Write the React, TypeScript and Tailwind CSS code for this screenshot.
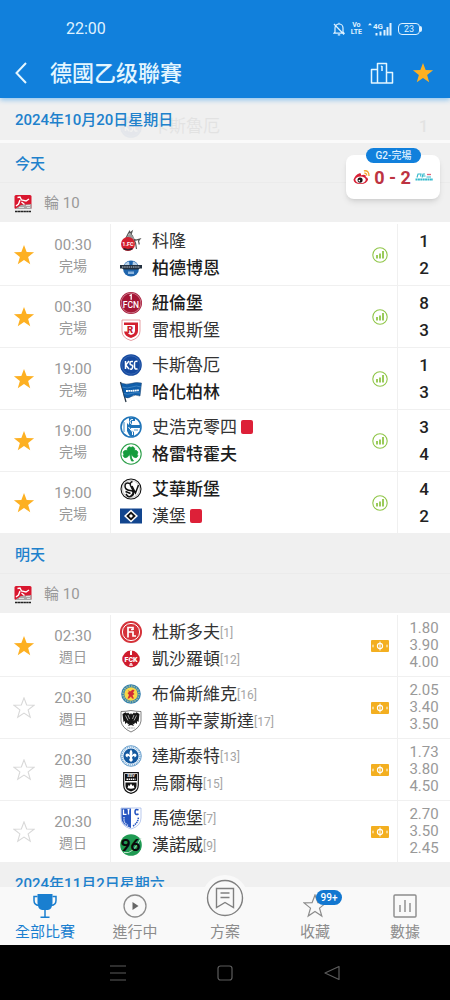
import { useState, type ReactNode } from "react";

type CrestName =
  | "koln" | "paderborn" | "nurnberg" | "jahn" | "ksc" | "hertha" | "schalke" | "furth" | "elversberg" | "hsv"
  | "dusseldorf" | "lautern" | "braunschweig" | "preussen" | "darmstadt" | "ulm" | "magdeburg" | "hannover";

type Team = { name: string; crest: CrestName; rank?: number; winner?: boolean; redCard?: boolean };
type Match = { time: string; status: string; teams: [Team, Team]; scores?: [number, number]; odds?: string[]; starred: boolean };

const today: Match[] = [
  { time: "00:30", status: "完場", starred: true, scores: [1, 2], teams: [{ name: "科隆", crest: "koln" }, { name: "柏德博恩", crest: "paderborn", winner: true }] },
  { time: "00:30", status: "完場", starred: true, scores: [8, 3], teams: [{ name: "紐倫堡", crest: "nurnberg", winner: true }, { name: "雷根斯堡", crest: "jahn" }] },
  { time: "19:00", status: "完場", starred: true, scores: [1, 3], teams: [{ name: "卡斯魯厄", crest: "ksc" }, { name: "哈化柏林", crest: "hertha", winner: true }] },
  { time: "19:00", status: "完場", starred: true, scores: [3, 4], teams: [{ name: "史浩克零四", crest: "schalke", redCard: true }, { name: "格雷特霍夫", crest: "furth", winner: true }] },
  { time: "19:00", status: "完場", starred: true, scores: [4, 2], teams: [{ name: "艾華斯堡", crest: "elversberg", winner: true }, { name: "漢堡", crest: "hsv", redCard: true }] },
];

const tomorrow: Match[] = [
  { time: "02:30", status: "週日", starred: true, odds: ["1.80", "3.90", "4.00"], teams: [{ name: "杜斯多夫", crest: "dusseldorf", rank: 1 }, { name: "凱沙羅頓", crest: "lautern", rank: 12 }] },
  { time: "20:30", status: "週日", starred: false, odds: ["2.05", "3.40", "3.50"], teams: [{ name: "布倫斯維克", crest: "braunschweig", rank: 16 }, { name: "普斯辛蒙斯達", crest: "preussen", rank: 17 }] },
  { time: "20:30", status: "週日", starred: false, odds: ["1.73", "3.80", "4.50"], teams: [{ name: "達斯泰特", crest: "darmstadt", rank: 13 }, { name: "烏爾梅", crest: "ulm", rank: 15 }] },
  { time: "20:30", status: "週日", starred: false, odds: ["2.70", "3.50", "2.45"], teams: [{ name: "馬德堡", crest: "magdeburg", rank: 7 }, { name: "漢諾威", crest: "hannover", rank: 9 }] },
];

const crests: Record<CrestName, ReactNode> = {
  koln: (
    <>
      <path d="M6 8 8 4 9.500 1.500 10 3l2-1.500-1 3 1.500 1.500 1 3 2.500 1 4-1-1.500 2 .8 3.500M14 10l1.500 3 1 6M9.500 5 7.500 8" fill="none" stroke="#555" strokeWidth="1.200" />
      <path d="m9 4 3 1 2.500 4-4 1-3-2z" fill="#999" />
      <circle cx="8" cy="14" r="7" fill="#d3202f" />
      <text x="8" y="16" textAnchor="middle" fontSize="5.500" fontWeight="700" fill="#fff" fontFamily="Roboto, sans-serif">1.FC</text>
      <path d="M3.500 18.500q4.500 2.500 9 0" stroke="#33212a" strokeWidth="1.500" fill="none" />
    </>
  ),
  paderborn: (
    <>
      <circle cx="11" cy="11.500" r="8" fill="#1f65ad" />
      <path d="M4 8.500a8 8 0 0 1 14 0z" fill="#b5cfe8" />
      <path d="M9 4h4l-.5 4h-3z" fill="#1f65ad" />
      <path d="M0 8h22v3.500h-2l-2 1H4l-2-1H0z" fill="#23303f" />
      <path d="M2 10h18" stroke="#c3cdd8" strokeWidth="1" strokeDasharray="1.500 .7" />
      <path d="M8 14.500h6V17H8z" fill="#8eb6df" />
    </>
  ),
  nurnberg: (
    <>
      <circle cx="11" cy="11" r="11" fill="#a51535" />
      <circle cx="11" cy="11" r="9.900" fill="none" stroke="#e3b7c0" strokeWidth=".6" />
      <path d="m9.500 3.800 1.700-1v5" stroke="#fff" strokeWidth="1.300" fill="none" />
      <text x="11" y="15.500" textAnchor="middle" fontSize="8.500" fontWeight="500" fill="#fff" fontFamily="Roboto, sans-serif">FCN</text>
    </>
  ),
  jahn: (
    <>
      <path d="M2 1h18v11q0 7-9 9.500-9-2.500-9-9.500z" fill="#fff" stroke="#e0888d" strokeWidth=".8" />
      <path d="M4 3.500h14V12q0 5-7 7-6-1.500-7-6.500h3.200q1 3 3.800 3.500 4-1 4-4.500V6H4z" fill="#d3202f" />
      <text x="10" y="14" textAnchor="middle" fontSize="9.500" fontWeight="900" fill="#c51d2c" fontFamily="Roboto, sans-serif">R</text>
    </>
  ),
  ksc: (
    <>
      <circle cx="11" cy="11" r="10.800" fill="#15499f" />
      <circle cx="11" cy="11" r="9.200" fill="none" stroke="#5d87c5" strokeWidth=".5" />
      <path d="M5.500 7v8M9 7l-3.200 4L9 15M13 7.500q-3-.5-3 1.500t1.500 2 1 2.500-2.700 1.300M17.500 7.500q-3-1-3 2v3q0 3.500 3 2.200" fill="none" stroke="#fff" strokeWidth="1.500" />
    </>
  ),
  hertha: (
    <>
      <path d="M.5 1 6 21" stroke="#2b3947" strokeWidth="1.300" />
      <path d="M1 2q5 2 10 .5T21.500 2L20 15q-5-2-8.500.5T4.500 16z" fill="#0f5eab" stroke="#163d67" strokeWidth=".5" />
      <path d="M2.300 6q5 2 9.500 0t9.200 0M3.800 12.500q4 1.500 7.500 0t9-.5" stroke="#4a8bc6" strokeWidth=".8" fill="none" />
      <path d="M6 10q7 0 13-1" stroke="#fff" strokeWidth="1.800" strokeDasharray="1.800 .4" fill="none" />
    </>
  ),
  schalke: (
    <>
      <circle cx="11" cy="11" r="10" fill="#fff" stroke="#1f74b8" strokeWidth="1.600" />
      <path d="M9 2v7L7 7v8l2 4 2 2 3-1V16l-3-2v-2h9V9h-8V5h3V2z" fill="#1f74b8" />
      <path d="M13 3.500q-3-.5-3 2t2 3M8.500 11l4 5v3" stroke="#fff" strokeWidth="1" fill="none" />
      <path d="M4 6v10M14 14h4" stroke="#5a9dcc" strokeWidth="1.200" />
    </>
  ),
  furth: (
    <>
      <circle cx="11" cy="11" r="10.200" fill="#fff" stroke="#2c9f49" strokeWidth="1.100" />
      <path d="M11 10Q5.500 7 8 4.500q1.500-1.500 3 0 1.500-1.500 3 0 2.500 2.500-3 5.500 4.500-4.500 6.500-1.500 1 1.800-.6 2.600 1.600 1.200.3 2.800-2.200 2.300-6.200-2.400 0 4 2.500 6.500h-2q-1.300-2.500-1.500-6.500-4 4.700-6.200 2.400-1.300-1.600.3-2.800-1.600-.8-.6-2.600Q6.500 5.500 11 10z" fill="#169c3e" stroke="#169c3e" strokeWidth=".8" />
    </>
  ),
  elversberg: (
    <>
      <circle cx="11" cy="11" r="10" fill="#fff" stroke="#111" strokeWidth="1.100" />
      <circle cx="11" cy="11" r="8.500" fill="none" stroke="#888" strokeWidth=".5" />
      <path d="M10 5.500Q5 4 5 8t5 4.500 2 4.500-6-1M12.500 3.500q-3 1-2 4l3 6q1 4-3 5M12 8l3.500 7L18.500 7M5.500 13.500l5 2" stroke="#111" strokeWidth="1.500" fill="none" />
    </>
  ),
  hsv: (
    <>
      <path d="M0 3.500h22v15H0z" fill="#12458e" />
      <path d="m11 4.500 7 6.500-7 6.500L4 11z" fill="#fff" />
      <path d="m11 6.500 4.800 4.500-4.800 4.500L6.200 11z" fill="#111" />
      <path d="m11 9 2 2-2 2-2-2z" fill="#fff" />
    </>
  ),
  dusseldorf: (
    <>
      <circle cx="11" cy="11" r="11" fill="#d5333a" />
      <circle cx="11" cy="11" r="8.600" fill="none" stroke="#fff" strokeWidth="1" />
      <path d="M8 16.500V6.500h5V9M8 11h5v4h3M11 8.500h2" fill="none" stroke="#fff" strokeWidth="1.700" />
    </>
  ),
  lautern: (
    <>
      <circle cx="11" cy="11" r="8.500" fill="#cf1c2d" />
      <path d="M10 3 12 2v5h-2z" fill="#fff" />
      <path d="M2.500 8.500h17v5h-17z" fill="#cf1c2d" />
      <text x="11" y="13.500" textAnchor="middle" fontSize="7" fontWeight="900" fill="#fff" fontFamily="Roboto, sans-serif">FCK</text>
      <path d="M10 15h2l1 3H9z" fill="#f7c9cd" />
    </>
  ),
  braunschweig: (
    <>
      <circle cx="11" cy="11" r="9.800" fill="#337fae" />
      <circle cx="11" cy="11" r="8" fill="none" stroke="#9ebf9e" strokeWidth="1.500" strokeDasharray="1.500 1" />
      <circle cx="11" cy="11" r="6.700" fill="#f7d747" />
      <path d="m8 7 2 1.500 3-2 1.500 1-1.500 2 1.500 1.500-2 1.500 1.500 3h-2l-1-2-2 2H7.500l1.500-3.500L7.500 10l1.500-1z" fill="#d32b35" />
    </>
  ),
  preussen: (
    <>
      <path d="M1 1.500q5 0 10-1 5 1 10 1V11q-1 7-10 11Q2 18 1 11z" fill="#fff" stroke="#4c4c4c" strokeWidth=".7" />
      <path d="M10 4.500 11 3l1 1.500 2-2 1 1 1.500-1.200L19.500 4 18.500 12l-1.500-1v3l-2-1.500-1 2-1.500-1L14 16l-3-1-3 1 1.500-2.500-1.500 1-1-2L5 14v-3l-1.500 1L2.500 4l3-1.700L7 3.500l1-1z" fill="#161616" />
      <path d="m5.500 5.500 2.500 5M8 5l1.500 4M16.500 5.500 14 10.500M14 5l-1.500 4" stroke="#fff" strokeWidth=".6" />
      <path d="M7.500 18h7" stroke="#888" strokeWidth="1" strokeDasharray="1 .6" />
    </>
  ),
  darmstadt: (
    <>
      <circle cx="11" cy="11" r="10.300" fill="#e9f2fa" stroke="#6ca2cf" strokeWidth="1" />
      <circle cx="11" cy="11" r="9" fill="none" stroke="#6ca2cf" strokeWidth="1.200" strokeDasharray="1 1" />
      <circle cx="11" cy="11" r="7.600" fill="#14599f" />
      <path d="M11 4.500q2.500 3 .8 6Q14 7.500 16 9q1.500 2-1.500 3.500.3-1.800-1-1.500-1.200.5-1.500 1.500.3 1.500 1 2.500L11 17l-2-2q.7-1 1-2.500-.3-1-1.500-1.500-1.300-.3-1 1.500Q4.500 11 6 9q2-1.500 4.200 1.500-1.700-3 .8-6z" fill="#fff" />
    </>
  ),
  ulm: (
    <>
      <path d="M3.700.700h14.600V13q0 7-7.300 8.300Q3.700 20 3.700 13z" fill="#fff" stroke="#111" strokeWidth="1.200" />
      <path d="M5 2h12v7H5z" fill="#111" />
      <text x="11" y="5.400" textAnchor="middle" fontSize="4" fontWeight="700" fill="#fff" fontFamily="Roboto, sans-serif">SSV</text>
      <path d="M6.500 7.300h9" stroke="#fff" strokeWidth="1.600" strokeDasharray="1.500 .6" />
      <path d="M5.500 10.500h11V14q0 4-5.500 5.500-5.500-1.500-5.500-5.500z" fill="#111" />
      <path d="m7.500 16 1-3 1 1 1.500-2.500 1.500 2.500 1-1 1 3q-3.500 1.500-7 0z" fill="#fff" />
    </>
  ),
  magdeburg: (
    <>
      <path d="M1 1h20v10q0 8-10 11Q1 19 1 11z" fill="#fff" stroke="#8aa5e0" strokeWidth=".6" />
      <path d="M1.500 1.500H11V21q-9.500-3-9.500-10z" fill="#2555c0" />
      <path d="M3.500 2.500v4.800h3M8.500 2.500v5M7.500 2.700h2" stroke="#fff" strokeWidth="1.300" fill="none" />
      <path d="M18.500 3q-3.500-1.500-3.500 2t3.500 2" stroke="#2555c0" strokeWidth="1.600" fill="none" />
      <path d="M4 10v4q1 3 4 4.500" stroke="#bccdf0" strokeWidth="1.500" strokeDasharray="1.500 .7" fill="none" />
      <path d="M13 19q5-3 5.500-9" stroke="#2555c0" strokeWidth="1.500" strokeDasharray="1.500 .7" fill="none" />
    </>
  ),
  hannover: (
    <>
      <circle cx="11" cy="11" r="10.800" fill="#1f9a52" />
      <path d="M4 18.500Q13 21 21 4" stroke="#b9dfc7" strokeWidth="1" fill="none" />
      <text x="10.500" y="17" textAnchor="middle" fontSize="17" fontWeight="900" fill="#0a0a0a" fontFamily="Lato, sans-serif">96</text>
    </>
  ),
};

function Crest({ name }: { name: CrestName }) {
  return (
    <svg viewBox="0 0 22 22" className="size-[22px] shrink-0 overflow-visible" aria-hidden="true">
      {crests[name]}
    </svg>
  );
}

function Star({ filled, className }: { filled: boolean; className: string }) {
  return (
    <svg viewBox="0 0 24 24" className={className} aria-hidden="true">
      <path
        d="m12 1 2.900 7.700 8.100.2-6.500 5.200 2.300 7.900L12 17.500 5.200 22l2.300-7.900L1 8.900l8.100-.2z"
        fill={filled ? "currentColor" : "none"}
        stroke="currentColor"
        strokeWidth={filled ? 0 : 1.2}
      />
    </svg>
  );
}

function TeamLine({ team }: { team: Team }) {
  return (
    <div className="flex h-[27px] items-center">
      <Crest name={team.crest} />
      <span className={team.winner ? "ml-2.5 pt-0.5 text-[17px] font-medium whitespace-nowrap text-[#1d1d1d]" : "ml-2.5 pt-0.5 text-[17px] whitespace-nowrap text-[#333]"}>
        {team.name}
      </span>
      {team.redCard && <span role="img" aria-label="紅牌" className="ml-1 h-3.5 w-3 rounded-xs bg-[#dd2038]" />}
      {team.rank !== undefined && <span className="pt-0.5 text-[12px] text-[#a5a5a5]">[{team.rank}]</span>}
    </div>
  );
}

function StatsIcon() {
  return (
    <svg viewBox="0 0 16 16" className="size-4" fill="none" stroke="#90c649" aria-hidden="true">
      <circle cx="8" cy="8" r="7.200" strokeWidth="1.100" />
      <path d="M5 8v3.500M8 6.500v5M11 4v7.500" strokeWidth="1.800" />
    </svg>
  );
}

function PitchIcon() {
  return (
    <svg viewBox="0 0 18 12" className="h-3 w-[18px]" aria-hidden="true">
      <rect width="18" height="12" rx="1" fill="#f3af20" />
      <circle cx="9" cy="6" r="2.600" fill="none" stroke="#fff" strokeWidth="1.100" />
      <path d="M9 1.500v9M2 4.700v2.600M16 4.700v2.600" stroke="#fff" strokeWidth="1" />
    </svg>
  );
}

function MatchRow({ match }: { match: Match }) {
  const [starred, setStarred] = useState(match.starred);
  return (
    <li className="flex h-[62px] border-b border-[#f0f0f0] bg-white">
      <div className="flex w-[111px] shrink-0 items-center border-r border-[#f0f0f0]">
        <button
          type="button"
          aria-label="收藏比賽"
          aria-pressed={starred}
          onClick={() => setStarred(!starred)}
          className={starred ? "flex h-full w-12 items-center justify-center text-[#fdb022]" : "flex h-full w-12 items-center justify-center text-[#d8d8d8]"}
        >
          <Star filled={starred} className="size-[22px]" />
        </button>
        <div className="w-[50px] pt-0.5 text-center text-[#999]">
          <div className="text-[15px] leading-[21px]">{match.time}</div>
          <div className="text-[14px] leading-[21px]">{match.status}</div>
        </div>
      </div>
      <div className="flex min-w-0 flex-1 flex-col justify-center pl-[9px]">
        {match.teams.map((t) => (
          <TeamLine key={t.name} team={t} />
        ))}
      </div>
      <button type="button" aria-label={match.scores ? "數據分析" : "陣容"} className="flex w-[34px] shrink-0 items-center justify-center">
        {match.scores ? <StatsIcon /> : <PitchIcon />}
      </button>
      <div className="flex w-[53px] shrink-0 flex-col justify-center border-l border-[#f0f0f0] text-center">
        {match.scores?.map((s, i) => (
          <span key={i} className="text-[17px] leading-[27px] font-medium text-[#222]">{s}</span>
        ))}
        {match.odds?.map((o, i) => (
          <span key={i} className="text-[15px] leading-[17px] text-[#999]">{o}</span>
        ))}
      </div>
    </li>
  );
}

function DayHeading({ children }: { children: ReactNode }) {
  return <h2 className="flex h-10 items-center border-b border-[#ebebeb] px-[15px] pt-1 text-[15px] font-medium text-[#2081cc]">{children}</h2>;
}

function RoundHeading() {
  return (
    <h3 className="flex h-[39px] items-center gap-3 px-3.5 pt-0.5 text-[15px] text-[#999]">
      <svg viewBox="0 0 18 18" className="size-[18px]" aria-hidden="true">
        <rect x=".5" width="17" height="14" rx="1.500" fill="#d9172f" />
        <path d="M1 14 7 10l10.500-1v5z" fill="#a9a6a6" />
        <path d="M3.500 2.500 6 2l1.500 3L12 6l3-2M6 5 4.500 9 2 11m5.500-4 3 2.500" stroke="#fff" strokeWidth="1.400" fill="none" />
        <path d="M5 12.500h5M12 10.500h4M13 12.500h3" stroke="#eee" strokeWidth=".8" />
        <path d="M1 16.500h16" stroke="#222" strokeWidth="1.500" strokeDasharray="2.500 .3" />
      </svg>
      <span>輪 10</span>
    </h3>
  );
}

function MatchList({ matches }: { matches: Match[] }) {
  return (
    <ul className="bg-white pt-0.5">
      {matches.map((m) => (
        <MatchRow key={m.teams[0].name} match={m} />
      ))}
    </ul>
  );
}

function StatusBar() {
  return (
    <div className="flex h-12 items-center justify-between pt-2.5 pr-7 pl-[66px] text-[#dff1ff]">
      <time className="text-[16px]">22:00</time>
      <div className="flex items-center gap-1.5">
        <svg viewBox="0 0 12 14" className="h-3.5 w-3" fill="none" stroke="currentColor" strokeWidth="1.200" aria-hidden="true">
          <path d="M2 10V6a4 4 0 0 1 8 0v4l1 1.200H1zM6 2V.8M4.800 12.800h2.400M1 2l10 10.500" />
        </svg>
        <div className="flex flex-col text-center text-[7px] leading-[7px] font-bold">
          <span>Vo</span>
          <span>LTE</span>
        </div>
        <svg viewBox="0 0 24 14" className="h-3.5 w-6" fill="currentColor" aria-label="4G+">
          <text x="5" y="6.500" fontSize="8" fontWeight="700" fontFamily="Roboto, sans-serif">4G</text>
          <path d="M0 3.200 2 1l2 2.200zM7.500 11h2v2.500h-2zM11.500 9.500h2v4h-2zM15.500 8h2v5.500h-2zM18.500 5h2v8.500h-2zM21.500 1h2v12.500h-2z" />
        </svg>
        <div className="flex items-center">
          <span className="flex h-3 w-[22px] items-center justify-center rounded-sm border border-current text-[9px] leading-none">23</span>
          <span className="h-1.5 w-0.5 rounded-r-xs bg-current" />
        </div>
      </div>
    </div>
  );
}

function LiveCard() {
  return (
    <button type="button" className="absolute top-[57px] right-2.5 flex h-11 w-[94px] items-center justify-center gap-1 rounded-lg bg-white shadow-md">
      <span className="absolute -top-[7px] left-5 flex h-[15px] w-[55px] items-center justify-center rounded-full bg-[#1180dc] text-[10px] font-medium whitespace-nowrap text-[#dff0ff]">
        G2-完場
      </span>
      <svg viewBox="0 0 18 16" className="h-4 w-[17px] shrink-0" aria-hidden="true">
        <path d="M7 4q-5 2-6.500 7Q1 15.500 8 15.500t8-5q-.5-2-2.500-2.500.5-2.500-2-2.500l-3 .7Q9 3.500 7 4z" fill="#d82035" />
        <ellipse cx="8" cy="11" rx="5.500" ry="3.500" fill="#fff" />
        <circle cx="7.500" cy="11.300" r="2.700" fill="#1c1214" />
        <circle cx="6.700" cy="11.800" r=".9" fill="#fff" />
        <path d="M11.500 1.500Q17 .5 17 7M12 4q2.500-.3 2.500 2.500" stroke="#f4a52b" strokeWidth="1.400" fill="none" />
      </svg>
      <span className="text-[18px] font-bold whitespace-nowrap text-[#bd3341]">0 - 2</span>
      <svg viewBox="0 0 18 8" className="h-2 w-[18px] shrink-0" aria-hidden="true">
        <path d="M2 4.500 3 1h3l-.5 2.500M7 4.500 8 1h2M8 3h2.500" stroke="#34b9cc" strokeWidth="1.100" fill="none" />
        <path d="M12 1.500h4" stroke="#e0647a" strokeWidth="1.300" />
        <path d="M11.500 4H16" stroke="#34b9cc" strokeWidth="1" />
        <path d="M.5 6.500H18" stroke="#34b9cc" strokeWidth="2" strokeDasharray="2 .4" />
      </svg>
    </button>
  );
}

function Tab({ label, active, badge, children }: { label: string; active?: boolean; badge?: string; children: ReactNode }) {
  return (
    <button
      type="button"
      aria-current={active ? "page" : undefined}
      className={active ? "relative flex flex-1 flex-col items-center justify-end gap-[3px] pb-[3px] text-[#1a7fd0]" : "relative flex flex-1 flex-col items-center justify-end gap-[3px] pb-[3px] text-[#8c8c8c]"}
    >
      {children}
      {badge && (
        <span className="absolute top-[3px] left-1/2 ml-px flex h-[15px] w-[26px] items-center justify-center rounded-full bg-[#1277d0] text-[10px] font-medium text-white">{badge}</span>
      )}
      <span className="text-[15px] leading-5">{label}</span>
    </button>
  );
}

export default function App() {
  const [favourite, setFavourite] = useState(true);
  return (
    <div lang="zh-Hant" className="flex h-screen flex-col bg-[#f0f0f0] font-['Roboto','Noto_Sans_CJK_TC',sans-serif]">
      <header className="relative z-10 bg-[#1180dc] shadow-[0_2px_5px_#8fc4ee]">
        <StatusBar />
        <div className="flex h-[50px] items-center pr-4 pl-3.5 text-[#e4f6ff]">
          <button type="button" aria-label="返回" className="flex h-10 w-9 items-center">
            <svg viewBox="0 0 14 22" className="h-[22px] w-3.5" fill="none" stroke="currentColor" strokeWidth="2" aria-hidden="true">
              <path d="m12 1-9.500 10L12 21" />
            </svg>
          </button>
          <h1 className="flex-1 text-[22px] font-medium">德國乙级聯賽</h1>
          <button type="button" aria-label="排名" className="mr-[18px]">
            <svg viewBox="0 0 24 22" className="h-[22px] w-6" fill="none" stroke="currentColor" strokeWidth="1.500" strokeLinejoin="round" aria-hidden="true">
              <path d="M7.500 21V1.500h9V21M7.500 7.500h-6V21h21V10.500h-6M12 4v5M11 4.700 12 4" />
            </svg>
          </button>
          <button type="button" aria-label="收藏聯賽" aria-pressed={favourite} onClick={() => setFavourite(!favourite)} className="text-[#fdb022]">
            <Star filled={favourite} className="size-[22px]" />
          </button>
        </div>
      </header>

      <main className="relative min-h-0 flex-1 overflow-hidden">
        <div className="relative flex h-[42px] items-center overflow-hidden px-[15px] pt-0.5">
          <div className="absolute inset-0 flex items-center pt-4 pl-[120px] opacity-5" aria-hidden="true">
            <Crest name="ksc" />
            <span className="ml-2.5 flex-1 text-[17px]">卡斯魯厄</span>
            <span className="w-[53px] text-center text-[17px] font-medium">1</span>
          </div>
          <h2 className="relative text-[15px] font-medium text-[#2081cc]">2024年10月20日星期日</h2>
        </div>
        <div className="h-[3px] bg-[#fafafa]" />

        <section>
          <DayHeading>今天</DayHeading>
          <RoundHeading />
          <MatchList matches={today} />
        </section>
        <section>
          <DayHeading>明天</DayHeading>
          <RoundHeading />
          <MatchList matches={tomorrow} />
        </section>
        <section>
          <DayHeading>2024年11月2日星期六</DayHeading>
        </section>
        <LiveCard />
      </main>

      <nav aria-label="主選單" className="relative z-10 flex h-[58px] shrink-0 bg-[#f9f9f9]">
        <Tab label="全部比賽" active>
          <svg viewBox="0 0 24 26" className="h-[26px] w-6" aria-hidden="true">
            <path d="M4.500 1h15v8.500q0 6.500-4.500 7.500H9q-4.500-1-4.500-7.500z" fill="currentColor" />
            <path d="M4.500 3.500H1v4q0 4.500 5 5M19.500 3.500H23v4q0 4.500-5 5M12 16v8M7.500 24.300h9" stroke="currentColor" strokeWidth="1.500" fill="none" />
          </svg>
        </Tab>
        <Tab label="進行中">
          <svg viewBox="0 0 24 24" className="mb-px size-6" aria-hidden="true">
            <circle cx="12" cy="12" r="11" fill="none" stroke="currentColor" strokeWidth="1.300" />
            <path d="m9.500 8 6 4-6 4z" fill="#666" />
          </svg>
        </Tab>
        <Tab label="方案">
          <span className="absolute -top-3 left-1/2 -ml-[23px] flex size-[46px] items-center justify-center rounded-full bg-[#f9f9f9]">
            <svg viewBox="0 0 38 38" className="size-[38px]" fill="none" stroke="#808080" strokeWidth="1.400" aria-hidden="true">
              <circle cx="19" cy="19" r="17.500" />
              <path d="M10.500 9.500h17v19L19 23.500l-8.500 5zM14.500 14h9M14.500 18.500h9" />
            </svg>
          </span>
        </Tab>
        <Tab label="收藏" badge="99+">
          <Star filled={false} className="mb-px size-6" />
        </Tab>
        <Tab label="數據">
          <svg viewBox="0 0 24 24" className="mb-px size-6" fill="none" stroke="currentColor" strokeWidth="1.400" aria-hidden="true">
            <rect x="1" y="1" width="22" height="22" rx="1" />
            <path d="M7 11v7M12 6v12M17 9v9" />
          </svg>
        </Tab>
      </nav>

      <footer className="grid h-[55px] shrink-0 grid-cols-3 bg-black px-16 text-[#5c5c5c]">
        <button type="button" aria-label="最近使用" className="flex items-center justify-center">
          <svg viewBox="0 0 16 16" className="size-4" stroke="currentColor" strokeWidth="1.200" aria-hidden="true">
            <path d="M0 1h16M0 8h16M0 15h16" />
          </svg>
        </button>
        <button type="button" aria-label="主畫面" className="flex items-center justify-center">
          <svg viewBox="0 0 16 16" className="size-4" fill="none" stroke="currentColor" strokeWidth="1.200" aria-hidden="true">
            <rect x="1" y="1" width="14" height="14" rx="2.500" />
          </svg>
        </button>
        <button type="button" aria-label="上一頁" className="flex items-center justify-center">
          <svg viewBox="0 0 16 16" className="size-4" fill="none" stroke="currentColor" strokeWidth="1.200" strokeLinejoin="round" aria-hidden="true">
            <path d="M15 1.500v13L1 8z" />
          </svg>
        </button>
      </footer>
    </div>
  );
}
